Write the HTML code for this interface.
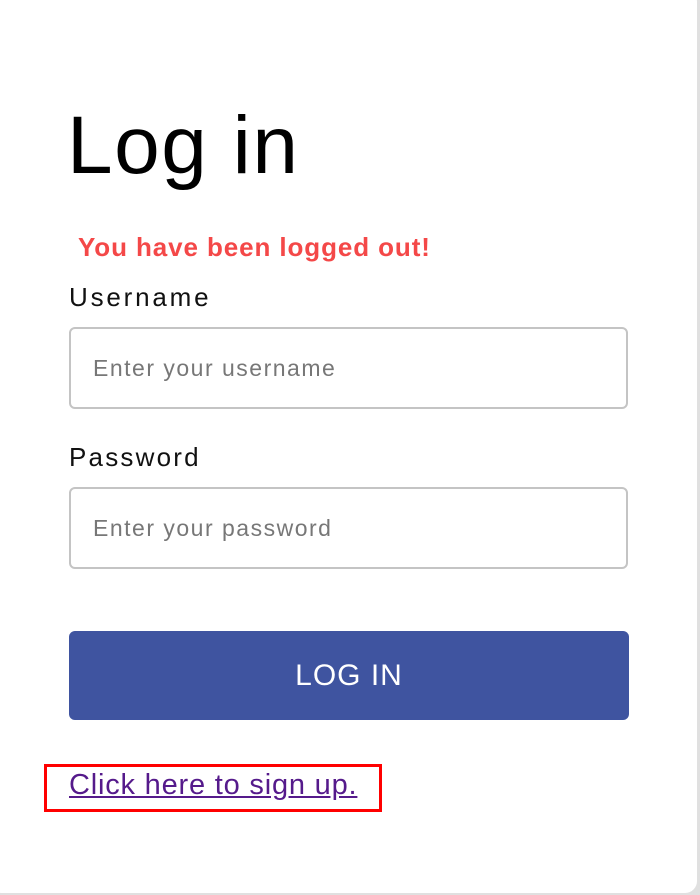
<!DOCTYPE html>
<html><head><style>
body{margin:0;width:700px;height:895px;background:#e0e0e0;font-family:"Liberation Sans",sans-serif;position:relative;overflow:hidden}
.card{position:absolute;left:-10px;top:-10px;width:707px;height:903px;background:#fff;border-radius:12px}
.a{position:absolute;white-space:nowrap}
.inp{position:absolute;left:69px;width:555px;height:78px;border:2px solid #c4c4c4;border-radius:6px;box-sizing:content-box}
.ph{position:absolute;left:22px;top:26px;font-size:23px;color:#777;letter-spacing:1.5px}
</style></head><body>
<div class="card"></div>
<div class="a" style="left:67px;top:96px;font-size:82px;color:#000;line-height:100px;letter-spacing:1.5px">Log in</div>
<div class="a" style="left:78px;top:232px;font-size:26px;font-weight:bold;color:#f44848;line-height:30px;letter-spacing:0.9px">You have been logged out!</div>
<div class="a" style="left:69px;top:282px;font-size:26px;color:#111;line-height:30px;letter-spacing:2.8px">Username</div>
<div class="inp" style="top:327px"><div class="ph">Enter your username</div></div>
<div class="a" style="left:69px;top:442px;font-size:26px;color:#111;line-height:30px;letter-spacing:2.2px">Password</div>
<div class="inp" style="top:487px"><div class="ph">Enter your password</div></div>
<div class="a" style="left:69px;top:631px;width:560px;height:89px;background:#3f54a0;border-radius:6px;color:#fff;font-size:30px;letter-spacing:1px;text-align:center;line-height:89px">LOG IN</div>
<div class="a" style="left:44px;top:764px;width:332px;height:42px;border:3px solid #f00"></div>
<div class="a" style="left:69px;top:768px;font-size:29px;color:#551a8b;text-decoration:underline;line-height:34px;letter-spacing:0.8px">Click here to sign up.</div>
</body></html>
